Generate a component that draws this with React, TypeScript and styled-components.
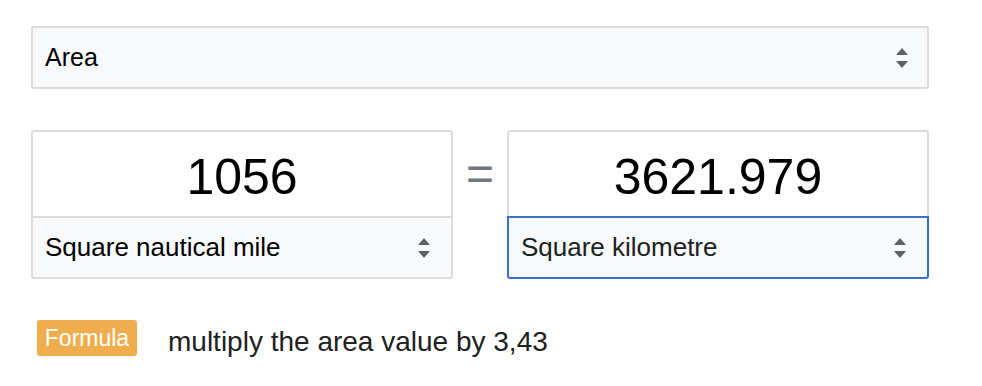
import styled, { createGlobalStyle } from 'styled-components';

const GlobalStyle = createGlobalStyle`
  body {
    margin: 0;
    background: #ffffff;
    font-family: 'Liberation Sans', Arial, sans-serif;
    color: #202122;
  }
`;

const Page = styled.div`
  width: 898px;
  padding: 26px 0 0 31px;
  display: flex;
  flex-direction: column;
`;

const SelectBox = styled.div<{ $active?: boolean; $joined?: boolean }>`
  display: flex;
  align-items: center;
  justify-content: space-between;
  box-sizing: border-box;
  height: 63px;
  padding: 0 18px 0 12px;
  background: #f8f9fa;
  border: 2px solid ${({ $active }) => ($active ? '#3a6fcf' : '#dcdcdc')};
  border-radius: ${({ $joined }) => ($joined ? '0 0 3px 3px' : '2px')};
  font-size: 25px;
  color: ${({ $active }) => ($active ? '#202122' : '#000')};
`;

const Arrows = () => (
  <svg width="14" height="22" viewBox="0 0 14 22">
    <path d="M7 1 L13 8 L1 8 Z" fill="#606366" />
    <path d="M7 21 L13 14 L1 14 Z" fill="#606366" />
  </svg>
);

const Converter = styled.div`
  display: flex;
  align-items: flex-start;
  margin-top: 41px;
`;

const UnitCard = styled.div`
  width: 423px;
  display: flex;
  flex-direction: column;
`;

const ValueField = styled.div`
  box-sizing: border-box;
  height: 86px;
  border: 2px solid #dcdcdc;
  border-bottom: none;
  border-radius: 3px 3px 0 0;
  display: flex;
  align-items: center;
  justify-content: center;
  font-size: 50px;
  color: #000;
  padding-top: 6px;
`;

const UnitSelect = styled(SelectBox)`
  font-size: 26px;
  padding-left: 12px;
  padding-right: 20px;
`;

const Equals = styled.div`
  width: 54px;
  display: flex;
  justify-content: center;
  padding-top: 20px;
  font-size: 48px;
  line-height: 48px;
  color: #72777d;
`;

const FormulaRow = styled.div`
  display: flex;
  align-items: flex-start;
  margin-top: 41px;
  padding-left: 6px;
`;

const Badge = styled.span`
  box-sizing: border-box;
  width: 100px;
  height: 36px;
  display: inline-flex;
  align-items: center;
  justify-content: center;
  background: #f0ad4e;
  color: #fff;
  border-radius: 3px;
  font-size: 23px;
`;

const FormulaText = styled.span`
  margin: 6px 0 0 31px;
  font-size: 28px;
  line-height: 32px;
  color: #202122;
`;

export default function App() {
  return (
    <>
      <GlobalStyle />
      <Page>
        <SelectBox>
          <span>Area</span>
          <Arrows />
        </SelectBox>
        <Converter>
          <UnitCard>
            <ValueField>1056</ValueField>
            <UnitSelect $joined>
              <span>Square nautical mile</span>
              <Arrows />
            </UnitSelect>
          </UnitCard>
          <Equals>=</Equals>
          <UnitCard>
            <ValueField>3621.979</ValueField>
            <UnitSelect $joined $active>
              <span>Square kilometre</span>
              <Arrows />
            </UnitSelect>
          </UnitCard>
        </Converter>
        <FormulaRow>
          <Badge>Formula</Badge>
          <FormulaText>multiply the area value by 3,43</FormulaText>
        </FormulaRow>
      </Page>
    </>
  );
}
